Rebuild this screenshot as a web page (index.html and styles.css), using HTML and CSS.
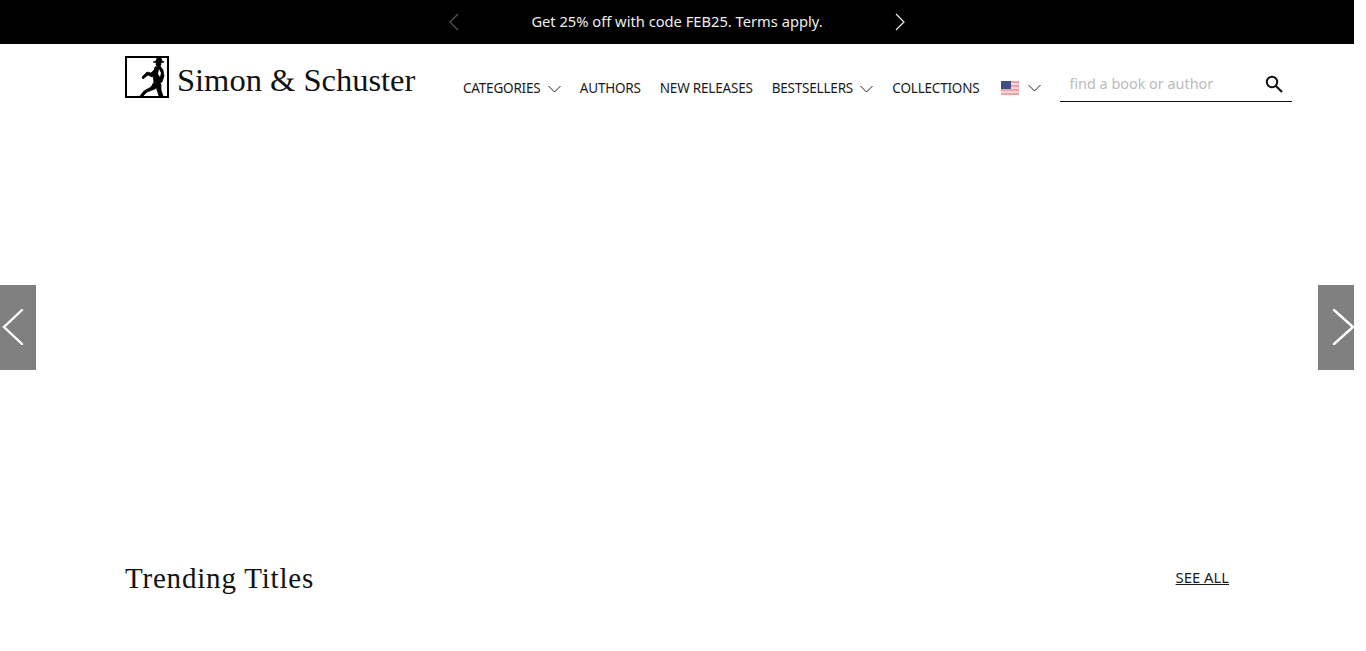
FILE: index.html
```html
<!DOCTYPE html>
<html lang="en">
<head>
    <meta charset="UTF-8">
    <meta name="viewport" content="width=device-width, initial-scale=1.0">
    <title>Simon &amp; Schuster</title>
    <link rel="stylesheet" href="styles.css">
</head>
<body>
    <div class="page">
        <div class="promo">
            <svg class="promo-arrow faded" width="12" height="18" viewBox="0 0 12 18"><path d="M10 1 2 9l8 8" fill="none" stroke="currentColor" stroke-width="1.2"/></svg>
            <span class="promo-text">Get 25% off with code FEB25. Terms apply.</span>
            <svg class="promo-arrow" width="12" height="18" viewBox="0 0 12 18"><path d="M2 1l8 8-8 8" fill="none" stroke="currentColor" stroke-width="1.2"/></svg>
        </div>

        <header class="header">
            <a class="logo" href="#">
                <svg class="logo-mark" width="44" height="42" viewBox="0 0 44 42">
                    <rect x="1" y="1" width="42" height="40" fill="#fff" stroke="#000" stroke-width="2"/>
                    <g fill="#000" stroke="#000" stroke-width="0.7">
                        <path d="M28 6l3-1 1-3h4l1 3 2 1-5 1z"/>
                        <circle cx="33.500" cy="8" r="2.500"/>
                        <path d="M30 11l5-1 3 4 1 6-2 6-3 2-5-2-1-6z"/>
                        <path d="M31 12l-5 5-4-1-5 5 1 2 5-4 4 2 5-6z"/>
                        <path d="M29 26l5 3-4 4-8 3-5 5h-3l5-6 7-4z"/>
                        <path d="M32 27l4 1v6l2 6h-4l-2-6-1-4z"/>
                    </g>
                    <path d="M34 13l2 4-1 4-2-3z" fill="#fff"/>
                </svg>
                <span class="logo-text">Simon &amp; Schuster</span>
            </a>

            <nav class="nav">
                <a class="nav-link" href="#">CATEGORIES <svg class="chevron" width="13" height="8" viewBox="0 0 13 8"><path d="M.5 1l6 6 6-6" fill="none" stroke="#222" stroke-width="1"/></svg></a>
                <a class="nav-link" href="#">AUTHORS</a>
                <a class="nav-link" href="#">NEW RELEASES</a>
                <a class="nav-link" href="#">BESTSELLERS <svg class="chevron" width="13" height="8" viewBox="0 0 13 8"><path d="M.5 1l6 6 6-6" fill="none" stroke="#222" stroke-width="1"/></svg></a>
                <a class="nav-link" href="#">COLLECTIONS</a>
            </nav>

            <div class="locale">
                <svg class="flag" width="18" height="14" viewBox="0 0 18 14">
                    <rect width="18" height="14" fill="#f6d4d6"/>
                    <path d="M0 1h18M0 5h18M0 9h18M0 13h18" stroke="#e0767c" stroke-width="1.1"/>
                    <rect width="10" height="8" fill="#3f4f85"/>
                </svg>
                <svg class="chevron" width="13" height="8" viewBox="0 0 13 8"><path d="M.5 1l6 6 6-6" fill="none" stroke="#222" stroke-width="1"/></svg>
            </div>

            <form class="search">
                <input class="search-input" type="text" placeholder="find a book or author">
                <svg class="search-icon" width="20" height="20" viewBox="0 0 20 20"><circle cx="8" cy="8" r="5.200" fill="none" stroke="#111" stroke-width="2"/><path d="M12 12l6 6" stroke="#111" stroke-width="2.200"/></svg>
            </form>
        </header>

        <section class="hero">
            <button class="hero-btn">
                <svg width="24" height="36" viewBox="0 0 24 36"><path d="M22 1 4 18l18 17" fill="none" stroke="#fff" stroke-width="2.400" stroke-linecap="round"/></svg>
            </button>
            <button class="hero-btn next">
                <svg width="24" height="36" viewBox="0 0 24 36"><path d="M4 1l19 17L4 35" fill="none" stroke="#fff" stroke-width="2.400" stroke-linecap="round"/></svg>
            </button>
        </section>

        <section class="trending">
            <h2 class="trending-title">Trending Titles</h2>
            <a class="see-all" href="#">SEE ALL</a>
        </section>
    </div>
</body>
</html>
```

FILE: styles.css
```css
* { box-sizing: border-box; }
html, body { overflow: hidden; }
body {
    margin: 0;
    background: #fff;
    color: #1a1a1a;
    font-family: 'Noto Sans', 'Open Sans', sans-serif;
}
a { color: inherit; text-decoration: none; }

.page { width: 1354px; height: 651px; }

.promo {
    display: flex;
    align-items: center;
    justify-content: center;
    gap: 71px;
    height: 44px;
    background: #000;
    color: #eee;
}
.promo-text { font-size: 14.7px; line-height: 20px; padding-bottom: 2px; }
.promo-arrow { color: #eee; }
.promo-arrow.faded { color: #555; }

.header {
    display: flex;
    align-items: flex-start;
    height: 76px;
    padding-left: 125px;
}
.logo {
    display: flex;
    align-items: flex-start;
    gap: 8px;
    width: 338px;
    margin-top: 12px;
    color: #111;
}
.logo-text {
    padding-top: 3px;
    font-family: 'Liberation Serif', serif;
    font-size: 32.5px;
    line-height: 42px;
    white-space: nowrap;
}

.nav {
    display: flex;
    align-items: center;
    gap: 19px;
    margin-top: 34px;
    line-height: 20px;
}
.nav-link {
    font-size: 13.5px;
    letter-spacing: -0.2px;
    white-space: nowrap;
}
.chevron { margin-left: 4px; vertical-align: 0; }

.locale {
    display: flex;
    align-items: center;
    margin: 37px 0 0 22px;
}
.flag { margin-right: 5px; }

.search {
    display: flex;
    align-items: center;
    justify-content: space-between;
    width: 232px;
    height: 36px;
    margin: 22px 0 0 19px;
    padding: 0 8px 0 9px;
    border-bottom: 1px solid #111;
}
.search-input {
    flex: 1;
    min-width: 0;
    border: none;
    outline: none;
    padding: 0;
    font-family: inherit;
    font-size: 14.4px;
    background: none;
}
.search-input::placeholder { color: #bbb; opacity: 1; }
.search-icon { flex-shrink: 0; }

.hero {
    display: flex;
    align-items: center;
    justify-content: space-between;
    height: 414px;
}
.hero-btn {
    display: flex;
    align-items: center;
    width: 36px;
    height: 85px;
    padding: 0;
    border: none;
    background: #808080;
}
.hero-btn.next { justify-content: flex-end; }

.trending {
    display: flex;
    align-items: center;
    justify-content: space-between;
    width: 1104px;
    margin-left: 125px;
    padding-top: 26px;
}
.trending-title {
    margin: 0;
    font-family: 'Liberation Serif', serif;
    font-size: 29px;
    font-weight: 400;
    letter-spacing: 0.8px;
    line-height: 36px;
    color: #111;
}
.see-all {
    margin-bottom: 2px;
    font-size: 14.8px;
    text-decoration: underline;
}
```
